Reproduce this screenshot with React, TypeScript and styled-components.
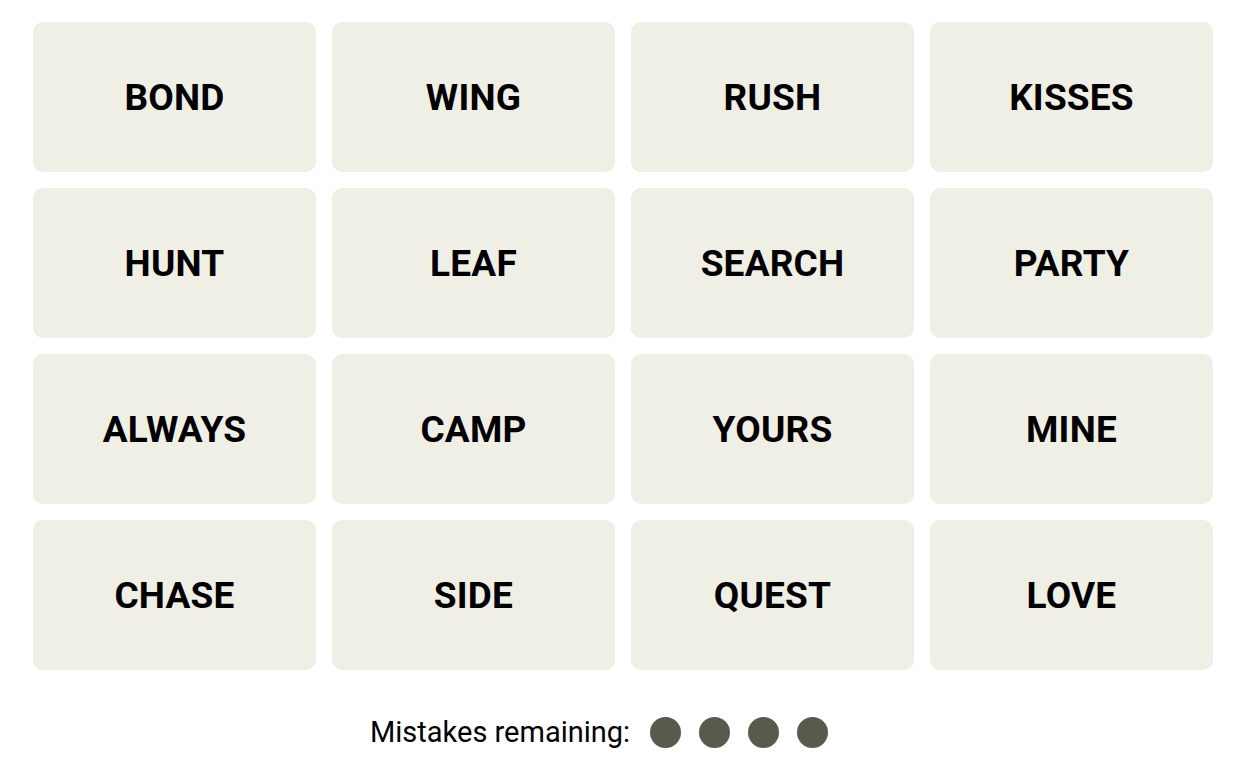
import React from 'react'
import styled, { createGlobalStyle } from 'styled-components'

const words = [
  'BOND', 'WING', 'RUSH', 'KISSES',
  'HUNT', 'LEAF', 'SEARCH', 'PARTY',
  'ALWAYS', 'CAMP', 'YOURS', 'MINE',
  'CHASE', 'SIDE', 'QUEST', 'LOVE',
]

const GlobalStyle = createGlobalStyle`
  body {
    margin: 0;
    background: #fff;
    font-family: Roboto, "Liberation Sans", sans-serif;
  }
`

const Page = styled.main`
  width: 1250px;
  height: 767px;
  padding: 22px 0 0 33px;
  box-sizing: border-box;
`

const Board = styled.section`
  display: grid;
  grid-template-columns: repeat(4, 283px);
  grid-auto-rows: 150px;
  gap: 16px;
`

const Tile = styled.button`
  display: flex;
  align-items: center;
  justify-content: center;
  border: none;
  border-radius: 10px;
  background: #efefe6;
  color: #000;
  font-family: Roboto, "Liberation Sans", sans-serif;
  font-weight: 700;
  font-size: 37px;
  letter-spacing: 0.2px;
  cursor: pointer;
`

const Footer = styled.footer`
  display: flex;
  align-items: center;
  margin-top: 46px;
  margin-left: 337px;
  height: 32px;
`

const Label = styled.span`
  font-size: 29px;
  color: #000;
  margin-right: 20px;
`

const Dots = styled.div`
  display: flex;
  gap: 18px;
`

const Dot = styled.span`
  width: 31px;
  height: 31px;
  border-radius: 50%;
  background: #5a594e;
`

export default function App() {
  return (
    <Page>
      <GlobalStyle />
      <Board>
        {words.map(w => (
          <Tile key={w}>{w}</Tile>
        ))}
      </Board>
      <Footer>
        <Label>Mistakes remaining:</Label>
        <Dots>
          {[0, 1, 2, 3].map(i => <Dot key={i} />)}
        </Dots>
      </Footer>
    </Page>
  )
}
